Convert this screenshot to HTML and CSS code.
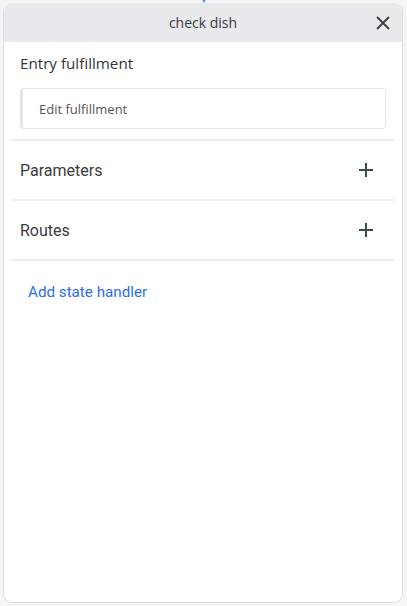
FILE: index.html
```html
<!DOCTYPE html>
<html>
<head>
<meta charset="utf-8">
<link rel="stylesheet" href="styles.css">
</head>
<body>
<div class="pin"></div>
<div class="card">
  <div class="header">
    <span class="title">check dish</span>
    <svg class="close" width="16" height="16" viewBox="0 0 16 16"><path d="M2 2 L14 14 M14 2 L2 14" stroke="#3b4540" stroke-width="2" fill="none"/></svg>
  </div>
  <div class="body">
    <div class="entry">
      <div class="entry-title">Entry fulfillment</div>
      <div class="input">Edit fulfillment</div>
    </div>
    <div class="row">
      <span class="row-label">Parameters</span>
      <svg class="plus" width="14" height="14" viewBox="0 0 14 14"><path d="M7 0 V14 M0 7 H14" stroke="#3c4a43" stroke-width="2" fill="none"/></svg>
    </div>
    <div class="row">
      <span class="row-label">Routes</span>
      <svg class="plus" width="14" height="14" viewBox="0 0 14 14"><path d="M7 0 V14 M0 7 H14" stroke="#3c4a43" stroke-width="2" fill="none"/></svg>
    </div>
    <div class="add">Add state handler</div>
  </div>
</div>
</body>
</html>
```
FILE: styles.css
```css
html, body {
  margin: 0;
  padding: 0;
}
body {
  background: #f4f5f7;
  width: 407px;
  height: 606px;
  overflow: hidden;
  position: relative;
}
.pin {
  position: absolute;
  left: 201px;
  top: -2px;
  width: 0;
  height: 0;
  border-left: 3px solid transparent;
  border-right: 3px solid transparent;
  border-top: 5px solid #5b8def;
}
.card {
  margin: 3px 4px 0 3px;
  height: 599px;
  background: #fff;
  border: 1px solid #dcdde1;
  border-top: none;
  border-radius: 9px;
  overflow: hidden;
  display: flex;
  flex-direction: column;
}
.header {
  height: 39px;
  background: #e8e9ec;
  display: flex;
  align-items: center;
  justify-content: center;
  position: relative;
}
.title {
  font-family: "Open Sans", "Noto Sans", sans-serif;
  font-size: 14px;
  color: #3a3a3a;
}
.close {
  position: absolute;
  right: 11px;
  top: 12px;
}
.body {
  padding: 0 7px 0 8px;
}
.entry {
  padding: 10px 8px 10px 8px;
  border-bottom: 2px solid #eeeeef;
}
.entry-title {
  font-family: "Open Sans", "Noto Sans", sans-serif;
  font-size: 15.2px;
  color: #333;
  line-height: 22px;
}
.input {
  margin-top: 14px;
  height: 39px;
  border: 1px solid #e6e6e8;
  border-left: 3px solid #e4e4e6;
  border-radius: 4px;
  padding-left: 16px;
  display: flex;
  align-items: center;
  font-family: "Open Sans", "Noto Sans", sans-serif;
  font-size: 13px;
  color: #555;
  margin-right: 1px;
}
.row {
  height: 58px;
  border-bottom: 2px solid #eeeeef;
  padding: 0 22px 0 8px;
  display: flex;
  align-items: center;
  justify-content: space-between;
}
.row-label {
  font-family: Roboto, sans-serif;
  font-size: 16px;
  color: #3c3c3c;
}
.add {
  font-family: Roboto, sans-serif;
  font-size: 15.2px;
  color: #2d6ee8;
  padding: 22px 16px;
}
```
